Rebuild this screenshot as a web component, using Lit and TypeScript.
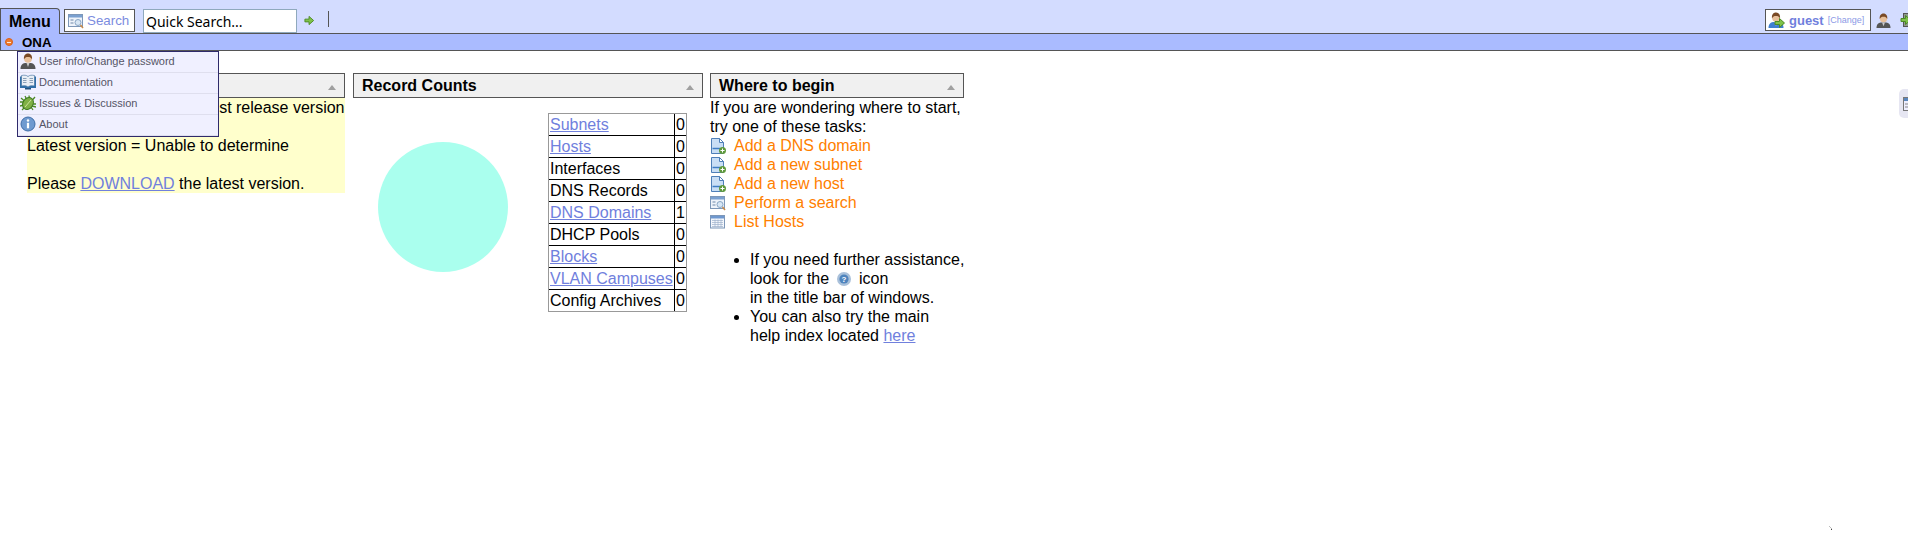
import { LitElement, css, html, svg } from 'lit'
import { customElement } from 'lit/decorators.js'

const icon = (size: number, box: number, body: unknown) => html`
  <svg class="ico" width=${size} height=${size} viewBox="0 0 ${box} ${box}">${body}</svg>
`

const person = (suit: string) => svg`
  <path d="M.5 16 C.5 12 2.500 10.500 5 10 L11 10 C13.500 10.500 15.500 12 15.500 16 Z" fill=${suit}/>
  <path d="M6.500 10 L8 14 L9.500 10 Z" fill="#ccc"/>
  <circle cx="8" cy="6" r="3.800" fill="#e8c09a"/>
  <path d="M4 6.500 C3.400 2 6 .5 8 .5 C10 .5 12.600 2 12 6.500 C11 4.500 10 4 8 4 C6 4 5 4.500 4 6.500 Z" fill="#7a4a25"/>
`

const greenArrow = svg`<path d="M1 4.500 H5.500 V1.500 L10.500 6 L5.500 10.500 V7.500 H1 Z" fill="#7fc24a" stroke="#4c8a24" stroke-width="1"/>`

const docAdd = svg`
  <path d="M1.500 .5 H9.500 L13.500 4.500 V15.500 H1.500 Z" fill="#c9def5" stroke="#4f7fb8"/>
  <path d="M9.500 .5 V4.500 H13.500 Z" fill="#fff" stroke="#4f7fb8"/>
  <path d="M2.500 10.500 H10" stroke="#3f7cc4" stroke-width="1.500"/>
  <circle cx="12.500" cy="12.500" r="3.500" fill="#5f9a3c"/>
  <path d="M10.500 12.500 H14.500 M12.500 10.500 V14.500" stroke="#fff"/>
`

const searchWin = svg`
  <rect x=".5" y="1.500" width="14" height="12" fill="#eef3fa" stroke="#7d97b8"/>
  <rect x="1" y="2" width="13" height="2.500" fill="#7aa0d0"/>
  <path d="M2.500 7 H5.500 M2.500 10 H5.500" stroke="#6c87a8"/>
  <circle cx="10" cy="9.500" r="3" fill="#d7e6f4" stroke="#8aa6c4"/>
  <path d="M12.500 12 L15 15" stroke="#c98a4a" stroke-width="1.500"/>
`

const listWin = svg`
  <rect x=".5" y="1.500" width="14" height="12.500" fill="#f4f7fc" stroke="#7d97b8"/>
  <rect x="1" y="2" width="13" height="2.500" fill="#6f98cf"/>
  <path d="M2 6.500 H13 M2 8.500 H13 M2 10.500 H13 M2 12.500 H13 M5 5.500 V13 M8 5.500 V13 M11 5.500 V13" stroke="#9fb2cc" stroke-width=".7"/>
`

const book = svg`
  <path d="M0 2.500 H16 V14 H0 Z" fill="#2f6fa8"/>
  <path d="M1.500 1.500 C4 1 6.500 1 8 2.500 C9.500 1 12 1 14.500 1.500 V12 C12 11.500 9.500 11.500 8 13 C6.500 11.500 4 11.500 1.500 12 Z" fill="#e8eef5" stroke="#3b6a98" stroke-width=".6"/>
  <path d="M3 4.500 H6.500 M3 6.500 H6.500 M3 8.500 H6.500 M9.500 4.500 H13 M9.500 6.500 H13 M9.500 8.500 H13" stroke="#8aa0b8"/>
  <rect x="5" y="14" width="6" height="1.500" fill="#23527f"/>
`

const bug = svg`
  <path d="M1 3 L4.500 6 M15 2 L11.500 6 M0 7 H4 M16 9 H12 M0 11 L4 10 M16 12 L12 11 M2 15 L5 12 M13 15 L11 12 M5 1 L6.500 4 M9 .5 L9.500 4" stroke="#4c8a24" stroke-width="1.300"/>
  <ellipse cx="8" cy="8.500" rx="5" ry="6.300" fill="#7fb045" stroke="#3f7a20" transform="rotate(35 8 8.500)"/>
  <path d="M5 12 L11 5" stroke="#cfe29c" stroke-width="1"/>
`

const info = svg`
  <circle cx="8" cy="8" r="7" fill="#6f9ad0" stroke="#3f6ea8"/>
  <circle cx="8" cy="4.500" r="1.200" fill="#fff"/>
  <rect x="6.900" y="6.800" width="2.200" height="5.500" fill="#fff"/>
`

const help = svg`
  <circle cx="8" cy="8" r="7" fill="#a9c0da"/>
  <circle cx="8" cy="8" r="4.600" fill="#4f84bd"/>
  <text x="8" y="11" text-anchor="middle" font-size="8" font-weight="bold" font-family="Liberation Sans" fill="#fff">?</text>
`

const COUNTS = [
  { name: 'Subnets', count: 0, link: true },
  { name: 'Hosts', count: 0, link: true },
  { name: 'Interfaces', count: 0, link: false },
  { name: 'DNS Records', count: 0, link: false },
  { name: 'DNS Domains', count: 1, link: true },
  { name: 'DHCP Pools', count: 0, link: false },
  { name: 'Blocks', count: 0, link: true },
  { name: 'VLAN Campuses', count: 0, link: true },
  { name: 'Config Archives', count: 0, link: false }
]

const TASKS = [
  { name: 'Add a DNS domain', glyph: docAdd },
  { name: 'Add a new subnet', glyph: docAdd },
  { name: 'Add a new host', glyph: docAdd },
  { name: 'Perform a search', glyph: searchWin },
  { name: 'List Hosts', glyph: listWin }
]

const MENU = [
  { name: 'User info/Change password', glyph: person('#555') },
  { name: 'Documentation', glyph: book },
  { name: 'Issues & Discussion', glyph: bug },
  { name: 'About', glyph: info }
]

@customElement('app-root')
export class AppRoot extends LitElement {
  static styles = css`
    :host {
      display: block;
      position: relative;
      width: 1908px;
      height: 535px;
      overflow: hidden;
      background: #fff;
      color: #000;
      font-family: 'Liberation Sans', Arial, sans-serif;
      font-size: 16px;
      line-height: 19px;
    }

    a {
      color: #7080dd;
      text-decoration: underline;
    }

    .ico {
      display: block;
      flex: none;
    }

    .bar {
      display: flex;
      align-items: flex-start;
      height: 34px;
      box-sizing: border-box;
      background: #d3dcff;
      border-bottom: 1px solid #555;
    }

    .tab {
      box-sizing: border-box;
      width: 60px;
      height: 26px;
      margin-top: 8px;
      padding: 3px 0 0 8px;
      background: #aabbff;
      border: 1px solid #555;
      border-width: 1px 1px 0 1px;
      border-top-right-radius: 4px;
      font-weight: bold;
      z-index: 1;
    }

    .search {
      display: flex;
      align-items: center;
      gap: 3px;
      box-sizing: border-box;
      width: 71px;
      height: 23px;
      margin: 9px 0 0 4px;
      padding-left: 3px;
      background: #fff;
      border: 1px solid #555;
      color: #7b8ce0;
      font-size: 13.33px;
    }

    .quick {
      box-sizing: border-box;
      width: 154px;
      height: 24px;
      margin: 9px 0 0 8px;
      padding: 2px 0 0 2px;
      background: #fff;
      border: 1px solid #8fa9bd;
      font-family: 'Noto Sans', sans-serif;
      font-size: 14px;
    }

    .go {
      margin: 15px 0 0 7px;
    }

    .sep {
      width: 1px;
      height: 16px;
      margin: 11px 0 0 13px;
      background: #555;
    }

    .user {
      display: flex;
      align-items: center;
      margin: 9px 0 0 auto;
    }

    .guest {
      display: flex;
      align-items: center;
      box-sizing: border-box;
      width: 106px;
      height: 22px;
      padding-left: 2px;
      background: #fff;
      border: 1px solid #555;
      color: #7080dd;
      font-size: 13px;
      font-weight: bold;
    }

    .guest .name {
      margin-left: 4px;
    }

    .guest small {
      margin-left: 4px;
      font-size: 9px;
      font-weight: normal;
      color: #8c9ae6;
    }

    .user .me {
      margin-left: 5px;
    }

    .user .exit {
      margin: 0 -8px 0 9px;
    }

    .status {
      display: flex;
      align-items: center;
      box-sizing: border-box;
      height: 17px;
      background: #aabbff;
      border-left: 1px solid #555;
      border-bottom: 1px solid #555;
      font-size: 13.33px;
      font-weight: bold;
    }

    .dot {
      display: flex;
      align-items: center;
      justify-content: center;
      box-sizing: border-box;
      width: 8px;
      height: 8px;
      margin: 0 9px 0 4px;
      border-radius: 50%;
      background: #ee7a2c;
      border: 1px solid #d9601a;
    }

    .dot::after {
      content: '';
      width: 4px;
      height: 1px;
      background: #ffe8d8;
    }

    .desk {
      display: flex;
      align-items: flex-start;
      padding: 22px 0 0 27px;
    }

    .panel {
      flex: none;
    }

    .title {
      display: flex;
      align-items: center;
      justify-content: space-between;
      box-sizing: border-box;
      height: 25px;
      padding: 0 8px 0 8px;
      background: #f0f0f0;
      border: 1px solid #555;
      font-weight: bold;
    }

    .caret {
      width: 0;
      height: 0;
      margin-top: 3px;
      border-left: 4px solid transparent;
      border-right: 4px solid transparent;
      border-bottom: 5px solid #a0a0a0;
    }

    .version {
      width: 318px;
      margin-right: 8px;
    }

    .notice {
      background: #ffffcc;
      white-space: nowrap;
    }

    .counts {
      width: 350px;
      margin-right: 7px;
    }

    .chart {
      display: flex;
      align-items: flex-start;
      padding-top: 15px;
    }

    .pie {
      flex: none;
      width: 130px;
      height: 130px;
      margin: 29px 40px 0 25px;
      border-radius: 50%;
      background: #aaffee;
    }

    table {
      flex: none;
      border-collapse: separate;
      border-spacing: 0;
      border: 1px solid #999;
    }

    td {
      height: 22px;
      padding: 0;
      border-bottom: 1px solid #000;
      white-space: nowrap;
    }

    tr:last-child td {
      height: 21px;
      border-bottom: none;
    }

    td.name {
      box-sizing: border-box;
      width: 126px;
      padding-left: 1px;
      border-right: 1px solid #000;
    }

    td.num {
      width: 11px;
      padding-left: 1px;
      box-sizing: border-box;
    }

    .begin {
      width: 254px;
    }

    .tasks {
      display: flex;
      flex-direction: column;
    }

    .task {
      display: flex;
      align-items: center;
      gap: 8px;
      height: 19px;
      color: #ff8000;
    }

    ul {
      margin: 19px 0 0;
      padding-left: 40px;
      white-space: nowrap;
    }

    .inline {
      display: inline-block;
      vertical-align: -3px;
      margin: 0 3px 0 2px;
    }

    .menu {
      position: absolute;
      left: 17px;
      top: 51px;
      box-sizing: border-box;
      width: 202px;
      background: #f0f0ff;
      border: 1px solid #2e2a6b;
      z-index: 2;
    }

    .item {
      display: flex;
      align-items: center;
      gap: 3px;
      box-sizing: border-box;
      height: 21px;
      padding: 0 0 2px 2px;
      border-bottom: 1px solid #dfdfee;
      color: #555566;
      font-size: 11px;
    }

    .side {
      position: absolute;
      right: 0;
      top: 89px;
      display: flex;
      align-items: center;
      box-sizing: border-box;
      width: 9px;
      height: 29px;
      padding-left: 4px;
      background: #e6e6f2;
      border-radius: 5px 0 0 5px;
      overflow: hidden;
    }

    .speck {
      position: absolute;
      left: 1829px;
      top: 526px;
    }
  `

  render () {
    return html`
      <div class="bar">
        <div class="tab">Menu</div>
        <div class="search">${icon(16, 16, searchWin)}<span>Search</span></div>
        <div class="quick">Quick Search...</div>
        <div class="go">${icon(11, 12, greenArrow)}</div>
        <div class="sep"></div>
        <div class="user">
          <div class="guest">
            ${icon(17, 17, svg`${person('#3f7fd0')}<g transform="translate(6 5)">${greenArrow}</g>`)}
            <span class="name">guest</span><small>[Change]</small>
          </div>
          <div class="me">${icon(15, 16, person('#555'))}</div>
          <div class="exit">
            ${icon(16, 16, svg`
              <rect x="3.500" y="1.500" width="11" height="13" fill="#8f9a8f" stroke="#555"/>
              <g transform="translate(0 2)">${greenArrow}</g>
            `)}
          </div>
        </div>
      </div>
      <div class="status"><span class="dot"></span><span>ONA</span></div>

      <div class="desk">
        <section class="panel version">
          <div class="title"><span></span><span class="caret"></span></div>
          <div class="notice">
            You are NOT using the latest release version<br /><br />
            Latest version = Unable to determine<br /><br />
            Please <a>DOWNLOAD</a> the latest version.
          </div>
        </section>

        <section class="panel counts">
          <div class="title"><span>Record Counts</span><span class="caret"></span></div>
          <div class="chart">
            <div class="pie"></div>
            <table>
              ${COUNTS.map(row => html`
                <tr>
                  <td class="name">${row.link ? html`<a>${row.name}</a>` : row.name}</td>
                  <td class="num">${row.count}</td>
                </tr>
              `)}
            </table>
          </div>
        </section>

        <section class="panel begin">
          <div class="title"><span>Where to begin</span><span class="caret"></span></div>
          If you are wondering where to start,<br />
          try one of these tasks:
          <div class="tasks">
            ${TASKS.map(task => html`
              <div class="task">${icon(16, 16, task.glyph)}<span>${task.name}</span></div>
            `)}
          </div>
          <ul>
            <li>
              If you need further assistance,<br />
              look for the <span class="inline">${icon(16, 16, help)}</span> icon<br />
              in the title bar of windows.
            </li>
            <li>
              You can also try the main<br />
              help index located <a>here</a>
            </li>
          </ul>
        </section>
      </div>

      <nav class="menu">
        ${MENU.map(item => html`
          <div class="item">${icon(16, 16, item.glyph)}<span>${item.name}</span></div>
        `)}
      </nav>

      <div class="side">
        ${icon(14, 14, svg`
          <rect x=".5" y=".5" width="13" height="13" fill="#eef" stroke="#777"/>
          <rect x="1" y="1" width="12" height="3" fill="#5a86bd"/>
          <path d="M2 7 H5 M2 10 H5" stroke="#888"/>
        `)}
      </div>
      <svg class="speck" width="5" height="5" viewBox="0 0 5 5">
        <path d="M0 0 L3 3" stroke="#bbb"/>
        <rect x="2" y="3" width="1" height="1" fill="#444"/>
      </svg>
    `
  }
}
